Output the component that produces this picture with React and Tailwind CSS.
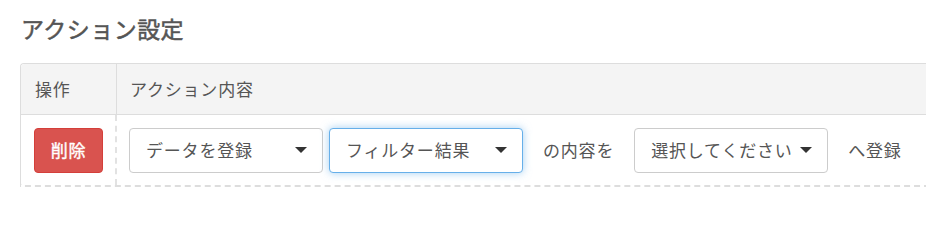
import React from "react";

function Caret() {
  return (
    <span className="block w-0 h-0 border-l-[6px] border-r-[6px] border-t-[6px] border-l-transparent border-r-transparent border-t-[#333]" />
  );
}

function Select({ label, focused }) {
  return (
    <div
      className={
        "flex items-center justify-between w-[194px] h-[45px] pl-[16px] pr-[15px] rounded-[4px] bg-white border shrink-0 " +
        (focused
          ? "border-[#66afe9] shadow-[0_0_8px_rgba(102,175,233,0.6)]"
          : "border-[#ccc]")
      }
    >
      <span className="whitespace-nowrap">{label}</span>
      <Caret />
    </div>
  );
}

export default function App() {
  return (
    <div className="w-[926px] h-[209px] overflow-hidden bg-white text-[#555] tracking-[0.05em] font-['Noto_Sans_CJK_JP','Noto_Sans',sans-serif]">
      <h2 className="pl-[21px] pt-[13px] text-[23px] leading-[30px] tracking-[0.02em] [-webkit-text-stroke:0.5px_#555]">アクション設定</h2>
      <div className="ml-[20px] mt-[20px] w-[960px] border-l border-t border-r border-[#ddd] rounded-t-[4px] text-[17px]">
        <div className="flex h-[51px] bg-[#f4f4f4] border-b border-[#ddd] rounded-t-[4px]">
          <div className="w-[96px] shrink-0 border-r border-[#ddd] flex items-center pl-[14px]">操作</div>
          <div className="flex items-center pl-[13px]">アクション内容</div>
        </div>
        <div className="flex h-[72px] border-b-2 border-dashed border-[#ddd] rounded-bl-[4px] -ml-px border-l border-l-[#ddd] [border-left-style:solid]">
          <div className="w-[96px] shrink-0 border-r-2 border-dashed border-[#e2e2e2] flex items-center pl-[13px]">
            <button className="w-[69px] h-[45px] rounded-[4px] bg-[#d9534f] border border-[#d43f3a] text-white tracking-[0.05em] [-webkit-text-stroke:0.4px_#fff]">
              削除
            </button>
          </div>
          <div className="flex items-center pl-[12px]">
            <Select label="データを登録" />
            <div className="ml-[6px]">
              <Select label="フィルター結果" focused />
            </div>
            <span className="ml-[20px] whitespace-nowrap">の内容を</span>
            <div className="ml-[20px]">
              <Select label="選択してください" />
            </div>
            <span className="ml-[20px] whitespace-nowrap">へ登録</span>
          </div>
        </div>
      </div>
    </div>
  );
}
